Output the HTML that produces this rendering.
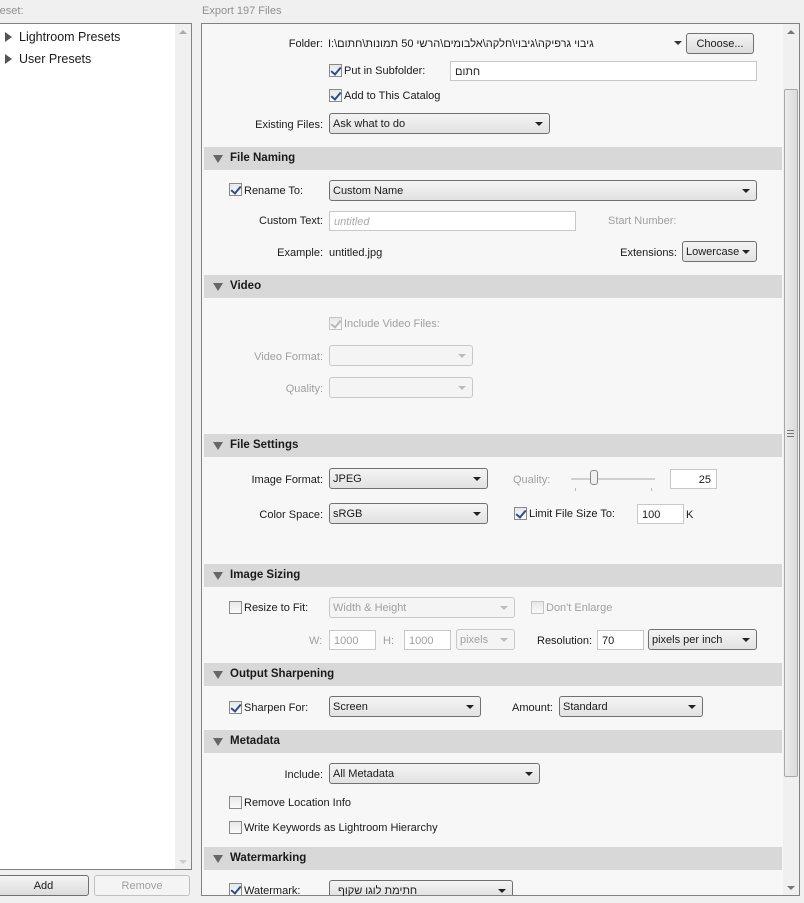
<!DOCTYPE html>
<html><head><meta charset="utf-8"><style>
*{box-sizing:border-box;margin:0;padding:0}
body{width:804px;height:903px;background:#f0f0f0;font-family:"Liberation Sans","Noto Sans CJK SC",sans-serif;font-size:11px;color:#1a1a1a;position:relative;overflow:hidden}
.a{position:absolute;white-space:nowrap}
.r{text-align:right}
.g{color:#a0a0a0}
.sel{position:absolute;height:21px;border:1px solid #707070;border-radius:3px;background:linear-gradient(#f4f4f4,#e2e2e2);padding:4px 0 0 3px;white-space:nowrap}
.sel:after{content:"";position:absolute;right:6px;top:8px;border-left:4px solid transparent;border-right:4px solid transparent;border-top:4px solid #222}
.sel.d{border-color:#c8c8c8;background:#f4f4f4;color:#a0a0a0}
.sel.d:after{border-top-color:#bbb}
.inp{position:absolute;height:20px;border:1px solid #c8c8c8;background:#fff;padding:4px 0 0 4px;white-space:nowrap}
.cb{position:absolute;width:13px;height:13px;border:1px solid #8a8a8a;background:linear-gradient(#e8e8e8,#fafafa)}
.cb.c:after{content:"";position:absolute;left:3px;top:0px;width:4px;height:8px;border:solid #2a4f8e;border-width:0 2px 2px 0;transform:rotate(40deg)}
.cb.d{border-color:#c4c4c4}
.cb.d.c:after{border-color:#b8b8b8}
.hd{position:absolute;left:204px;width:578px;height:23px;background:#d8d8d8;font-weight:bold;padding:5px 0 0 26px;font-size:11.5px}
.hd:before{content:"";position:absolute;left:9px;top:8px;border-left:5px solid transparent;border-right:5px solid transparent;border-top:8px solid #666}
.path{display:flex;direction:ltr}
.path span{display:inline-block;white-space:pre}
</style></head><body>
<div class="a g" style="left:-4px;top:5px;color:#909090">reset:</div>
<div class="a" style="left:202px;top:5px;color:#909090">Export 197 Files</div>
<!-- left panel -->
<div class="a" style="left:-2px;top:23px;width:194px;height:847px;border:1px solid #828282;background:#fff"></div>
<div class="a" style="left:175px;top:24px;width:16px;height:845px;background:#f0f0f0"></div>
<div class="a" style="left:179px;top:30px;border-left:4px solid transparent;border-right:4px solid transparent;border-bottom:4px solid #aaa"></div>
<div class="a" style="left:179px;top:860px;border-left:4px solid transparent;border-right:4px solid transparent;border-top:4px solid #ccc"></div>
<div class="a" style="left:5px;top:32px;border-top:5px solid transparent;border-bottom:5px solid transparent;border-left:7px solid #555"></div>
<div class="a" style="left:19px;top:30px;font-size:12.5px">Lightroom Presets</div>
<div class="a" style="left:5px;top:54px;border-top:5px solid transparent;border-bottom:5px solid transparent;border-left:7px solid #555"></div>
<div class="a" style="left:19px;top:52px;font-size:12.5px">User Presets</div>
<div class="a" style="left:-2px;top:875px;width:91px;height:21px;border:1px solid #707070;border-radius:3px;background:linear-gradient(#f4f4f4,#dcdcdc);text-align:center;padding-top:4px">Add</div>
<div class="a" style="left:94px;top:875px;width:96px;height:21px;border:1px solid #c0c0c0;border-radius:3px;background:#f4f4f4;text-align:center;padding-top:4px;color:#a0a0a0">Remove</div>
<!-- right panel -->
<div class="a" style="left:201px;top:23px;width:599px;height:873px;border:1px solid #828282;background:#f7f7f7"></div>
<div class="a" style="left:783px;top:24px;width:16px;height:871px;background:#f0f0f0"></div>
<div class="a" style="left:784px;top:89px;width:14px;height:688px;border:1px solid #a8a8a8;border-radius:2px;background:linear-gradient(90deg,#ececec,#dadada)"></div>
<div class="a" style="left:787px;top:430px;width:7px;height:7px;border-top:1px solid #777;border-bottom:1px solid #777"></div>
<div class="a" style="left:787px;top:433px;width:7px;height:1px;background:#777"></div>
<div class="a" style="left:787px;top:30px;border-left:4px solid transparent;border-right:4px solid transparent;border-bottom:4px solid #777"></div>
<div class="a" style="left:787px;top:886px;border-left:4px solid transparent;border-right:4px solid transparent;border-top:4px solid #777"></div>

<div class="a r" style="right:481px;top:38px">Folder:</div>
<div class="a path" style="left:328px;top:38px"><span>I:\</span><span dir="rtl">חתום</span><span>\</span><span dir="rtl">הרשי 50 תמונות</span><span>\</span><span dir="rtl">אלבומים</span><span>\</span><span dir="rtl">חלקה</span><span>\</span><span dir="rtl">גיבוי</span><span>\</span><span dir="rtl">גיבוי גרפיקה</span></div>
<div class="a" style="left:674px;top:41px;border-left:4px solid transparent;border-right:4px solid transparent;border-top:4px solid #333"></div>
<div class="a" style="left:686px;top:33px;width:68px;height:21px;border:1px solid #707070;border-radius:3px;background:linear-gradient(#f4f4f4,#dcdcdc);text-align:center;padding-top:4px">Choose...</div>
<div class="cb c" style="left:329px;top:64px"></div><div class="a" style="left:344px;top:65px">Put in Subfolder:</div>
<div class="inp" style="left:450px;top:61px;width:307px;height:20px">חתום</div>
<div class="cb c" style="left:329px;top:89px"></div><div class="a" style="left:344px;top:90px">Add to This Catalog</div>
<div class="a r" style="right:481px;top:119px">Existing Files:</div>
<div class="sel" style="left:329px;top:113px;width:221px">Ask what to do</div>

<div class="hd" style="top:147px">File Naming</div>
<div class="cb c" style="left:229px;top:183px"></div><div class="a" style="left:244px;top:185px">Rename To:</div>
<div class="sel" style="left:329px;top:180px;width:428px">Custom Name</div>
<div class="a r" style="right:481px;top:215px">Custom Text:</div>
<div class="inp" style="left:329px;top:211px;width:247px;color:#aaa;font-style:italic">untitled</div>
<div class="a g" style="left:608px;top:215px">Start Number:</div>
<div class="a r" style="right:481px;top:247px">Example:</div>
<div class="a" style="left:329px;top:247px">untitled.jpg</div>
<div class="a r" style="right:127px;top:247px">Extensions:</div>
<div class="sel" style="left:682px;top:241px;width:75px">Lowercase</div>

<div class="hd" style="top:275px">Video</div>
<div class="cb d c" style="left:329px;top:317px"></div><div class="a g" style="left:344px;top:318px">Include Video Files:</div>
<div class="a r g" style="right:481px;top:351px">Video Format:</div>
<div class="sel d" style="left:329px;top:345px;width:144px"></div>
<div class="a r g" style="right:481px;top:383px">Quality:</div>
<div class="sel d" style="left:329px;top:377px;width:144px"></div>

<div class="hd" style="top:434px">File Settings</div>
<div class="a r" style="right:481px;top:474px">Image Format:</div>
<div class="sel" style="left:329px;top:468px;width:159px">JPEG</div>
<div class="a g" style="left:513px;top:474px">Quality:</div>
<div class="a" style="left:571px;top:478px;width:84px;height:2px;background:#d0d0d0"></div>
<div class="a" style="left:590px;top:470px;width:8px;height:15px;border:1px solid #888;border-radius:3px;background:#f0f0f0"></div>
<div class="a" style="left:575px;top:488px;width:1px;height:3px;background:#bbb"></div>
<div class="a" style="left:651px;top:488px;width:1px;height:3px;background:#bbb"></div>
<div class="inp r" style="left:670px;top:469px;width:47px;padding-right:5px">25</div>
<div class="a r" style="right:481px;top:509px">Color Space:</div>
<div class="sel" style="left:329px;top:503px;width:159px">sRGB</div>
<div class="cb c" style="left:514px;top:507px"></div><div class="a" style="left:529px;top:508px">Limit File Size To:</div>
<div class="inp" style="left:637px;top:504px;width:47px">100</div>
<div class="a" style="left:686px;top:509px">K</div>

<div class="hd" style="top:564px">Image Sizing</div>
<div class="cb" style="left:229px;top:601px"></div><div class="a" style="left:244px;top:602px">Resize to Fit:</div>
<div class="sel d" style="left:329px;top:597px;width:186px">Width &amp; Height</div>
<div class="cb d" style="left:531px;top:601px"></div><div class="a g" style="left:546px;top:602px">Don't Enlarge</div>
<div class="a g" style="left:309px;top:635px">W:</div>
<div class="inp g" style="left:329px;top:630px;width:47px">1000</div>
<div class="a g" style="left:383px;top:635px">H:</div>
<div class="inp g" style="left:404px;top:630px;width:47px">1000</div>
<div class="sel d" style="left:456px;top:629px;width:59px">pixels</div>
<div class="a" style="left:537px;top:635px">Resolution:</div>
<div class="inp" style="left:597px;top:630px;width:47px">70</div>
<div class="sel" style="left:648px;top:629px;width:109px">pixels per inch</div>

<div class="hd" style="top:663px">Output Sharpening</div>
<div class="cb c" style="left:229px;top:701px"></div><div class="a" style="left:244px;top:702px">Sharpen For:</div>
<div class="sel" style="left:329px;top:696px;width:152px">Screen</div>
<div class="a" style="left:512px;top:702px">Amount:</div>
<div class="sel" style="left:559px;top:696px;width:144px">Standard</div>

<div class="hd" style="top:730px">Metadata</div>
<div class="a r" style="right:481px;top:769px">Include:</div>
<div class="sel" style="left:329px;top:763px;width:211px">All Metadata</div>
<div class="cb" style="left:229px;top:796px"></div><div class="a" style="left:244px;top:797px">Remove Location Info</div>
<div class="cb" style="left:229px;top:821px"></div><div class="a" style="left:244px;top:822px">Write Keywords as Lightroom Hierarchy</div>

<div class="hd" style="top:847px">Watermarking</div>
<div class="cb c" style="left:229px;top:883px"></div><div class="a" style="left:244px;top:885px">Watermark:</div>
<div class="sel" style="left:329px;top:880px;width:184px;height:15px;border-bottom:none;border-radius:3px 3px 0 0;padding-left:8px">חתימת לוגו שקוף</div>
</body></html>
